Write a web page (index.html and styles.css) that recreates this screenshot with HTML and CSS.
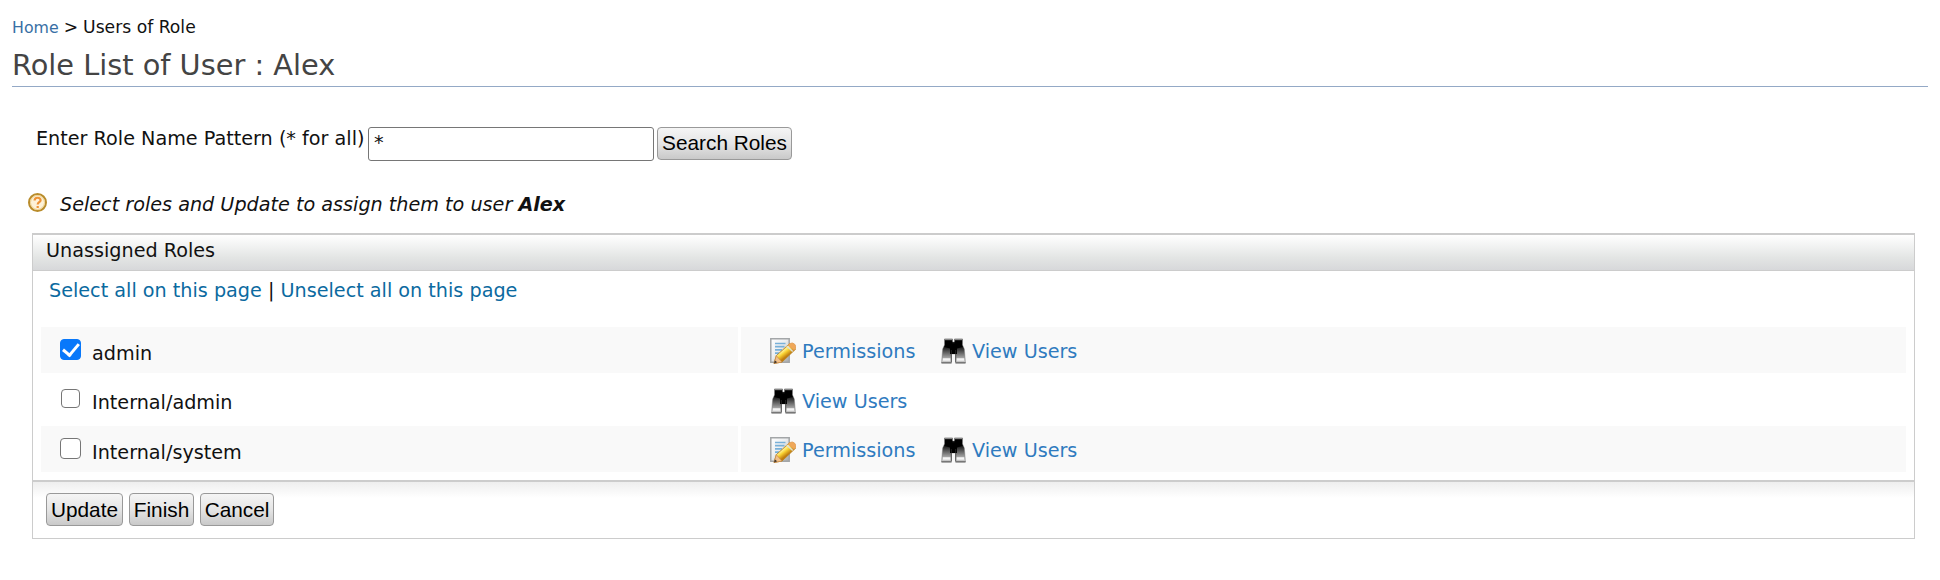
FILE: index.html
```html
<!DOCTYPE html>
<html lang="en">
<head>
<meta charset="utf-8">
<title>Users of Role</title>
<link rel="stylesheet" href="styles.css">
</head>
<body>
<svg class="defs" width="0" height="0" aria-hidden="true">
  <defs>
    <linearGradient id="paper" x1="0" y1="0" x2="1" y2="1"><stop offset="0" stop-color="#fff"/><stop offset=".45" stop-color="#eceef0"/><stop offset="1" stop-color="#a4a6a8"/></linearGradient>
    <linearGradient id="barrel" x1="0" y1="0" x2="0" y2="1"><stop offset="0" stop-color="#000"/><stop offset=".34" stop-color="#1c1c1c"/><stop offset=".8" stop-color="#aaa"/><stop offset="1" stop-color="#d2d2d2"/></linearGradient>
    <linearGradient id="wood" gradientUnits="userSpaceOnUse" x1="11" y1="10" x2="17" y2="18"><stop offset="0" stop-color="#e0a526"/><stop offset=".35" stop-color="#fff08a"/><stop offset=".6" stop-color="#f8d030"/><stop offset="1" stop-color="#c07c10"/></linearGradient>
  </defs>
  <symbol id="edit" viewBox="0 0 26 26">
    <path d="M.8.8h18.400v23.400H.8z" fill="url(#paper)" stroke="#a3a6a8" stroke-width="1.500"/>
    <path d="M5 5.500h10.500M5 8.700h9.500M5 11.900h7M5 15.100h4" stroke="#78b0d8" stroke-width="1.700"/>
    <path d="M4 25.500 6.300 17.700 19.500 5.700 25.500 11.200 12 24z" fill="url(#wood)" stroke="#b98322" stroke-width=".9"/>
    <path d="M4 25.500 6.300 17.700 12 24z" fill="#f1c08a" stroke="#c98b4b" stroke-width=".7"/>
    <path d="M4 25.500l.9-3 2.300 1.800z" fill="#39302c"/>
    <path d="M18 7l1.500-1.300Q22.500 4 24.500 6q2.200 2.300 1 4.600L24.200 12.500z" fill="#f0a85a" stroke="#dc9a50" stroke-width=".7"/>
    <path d="M16.800 8l5.900 5.500" stroke="#dde0d8" stroke-width="1.500"/>
  </symbol>
  <symbol id="binoculars" viewBox="0 0 25 26">
    <path d="M3.500 1h8v3h2V1h8v6l1.800 4L24.500 25H14.500v-9h-4v9H.5L1.700 11l1.800-4z" fill="url(#barrel)" stroke="#777" stroke-opacity=".55" stroke-width=".8"/>
    <path d="M3.500 1.500h8M13.500 1.500h8" stroke="#888" stroke-width="1.400"/>
    <path d="M4 2.700h7.200v2.800h2.600V2.700H21V7l.5 2-5.500 1.500V16H9v-5.500L3.500 9 4 7z" fill="#000"/>
    <path d="M1.800 21.500H9.500M15.500 21.500h7.700" stroke="#f5f5f5" stroke-width="2.400"/>
    <path d="M.5 24.700h10M14.500 24.700h10" stroke="#777" stroke-width="1.500"/>
    <path d="M10.300 12v12M14.700 12v12" stroke="#333" stroke-opacity=".7"/>
  </symbol>
</svg>
<div class="page">
  <nav class="crumbs"><a href="#">Home</a><span class="sep">&gt;</span><span>Users of Role</span></nav>
  <h1 class="title">Role List of User : Alex</h1>
  <form class="search">
    <label for="pattern">Enter Role Name Pattern (* for all)</label>
    <input class="pattern" id="pattern" type="text" value="*">
    <button class="btn btn-search" type="button">Search Roles</button>
  </form>
  <div class="hint">
    <svg class="help" viewBox="0 0 19 19"><circle cx="9.500" cy="9.500" r="8.500" fill="#fdf2d8" stroke="#b98c2b" stroke-width="2"/><circle cx="9.500" cy="9.500" r="7" fill="none" stroke="#ecd08d"/><path d="M6.600 7.500c0-3.600 6-3.600 6-.3 0 2-2.900 2.100-2.900 4.300M9.700 13v2" fill="none" stroke="#ee9338" stroke-width="2.200"/></svg>
    <p class="hint-text">Select roles and Update to assign them to user <strong>Alex</strong></p>
  </div>
  <section class="panel">
    <h2 class="panel-head">Unassigned Roles</h2>
    <div class="select"><a href="#">Select all on this page</a> | <a href="#">Unselect all on this page</a></div>
    <div class="roles">
      <div class="row odd">
        <label class="cell name"><input class="check" type="checkbox" checked><span>admin</span></label>
        <div class="cell actions"><a class="perm" href="#"><svg class="edit"><use href="#edit"/></svg>Permissions</a><a class="view" href="#"><svg class="bino"><use href="#binoculars"/></svg>View Users</a></div>
      </div>
      <div class="row even">
        <label class="cell name"><input class="check small" type="checkbox"><span>Internal/admin</span></label>
        <div class="cell actions"><a class="view" href="#"><svg class="bino"><use href="#binoculars"/></svg>View Users</a></div>
      </div>
      <div class="row odd">
        <label class="cell name"><input class="check" type="checkbox"><span>Internal/system</span></label>
        <div class="cell actions"><a class="perm" href="#"><svg class="edit"><use href="#edit"/></svg>Permissions</a><a class="view" href="#"><svg class="bino"><use href="#binoculars"/></svg>View Users</a></div>
      </div>
    </div>
    <div class="footer"><button class="btn update">Update</button><button class="btn finish">Finish</button><button class="btn cancel">Cancel</button></div>
  </section>
</div>
</body>
</html>
```
FILE: styles.css
```css
* { box-sizing: border-box; }
body { margin: 0; background: #fff; color: #111; font: 19.2px/24px "DejaVu Sans", sans-serif; }
a { text-decoration: none; color: #2f7bbf; }
.defs { display: block; height: 0; }
.page { padding: 15px 12px 0; }
.crumbs { display: flex; align-items: baseline; height: 24px; font-size: 17.2px; }
.crumbs a { font-size: 15.8px; color: #386fa5; }
.sep { margin: 0 5px 0 5px; }
.title { margin: 0; height: 48px; padding-top: 8px; border-bottom: 1px solid #94a9c6; color: #444; font-size: 28.8px; line-height: 36px; font-weight: normal; }
.search { display: flex; align-items: flex-start; height: 34px; margin: 40px 0 0 24px; }
.search label { width: 332px; white-space: nowrap; }
.pattern { width: 286px; height: 34px; padding: 0 5px 4px; border: 1px solid #767676; border-radius: 3px; font: 19.2px "DejaVu Sans", sans-serif; color: #111; background: #fff; }
.btn { height: 33px; padding: 0; border: 1px solid #999; border-radius: 4px; background: linear-gradient(#f5f5f5, #e5e5e5 50%, #c9c9c9); color: #000; font: 20.8px/28px "Liberation Sans", Arial, sans-serif; white-space: nowrap; }
.btn-search { width: 135px; margin-left: 3px; padding-bottom: 2px; }
.hint { display: flex; margin: 31px 0 0 16px; height: 41px; }
.help { width: 19px; height: 19px; margin-top: 1px; }
.hint-text { margin: 1px 0 0 13px; font-style: italic; }
.panel { margin: 0 13px 0 20px; height: 306px; border: 1px solid #ccc; border-top-width: 2px; }
.panel-head { margin: 0; height: 36px; padding: 4px 13px; border-bottom: 1px solid #ccc; background: linear-gradient(#fff, #e3e5e4 65%, #d7d8da); font-size: 19.2px; font-weight: normal; line-height: 24px; }
.select { height: 56px; padding: 8px 0 0 16px; }
.select a { color: #0b6aa0; }
.roles { height: 153px; padding: 0 8px; }
.row { display: grid; grid-template-columns: 697px 1fr; column-gap: 3px; height: 46px; }
.row.even { height: 47px; margin: 3px 0; }
.odd .cell { background: #f9f9f9; }
.cell { display: flex; align-items: flex-start; }
.name { padding: 12px 0 0 19px; }
.name span { margin: 3px 0 0 11px; }
.check { appearance: none; width: 21px; height: 21px; margin: 0; border: 1.5px solid #767676; border-radius: 4px; background: #fff; }
.check.small { width: 19px; height: 19px; margin: 1px 1px 0; }
.check:checked { display: grid; place-items: center; border-color: #0878fa; background: #0878fa; }
.check:checked::before { content: ""; width: 7px; height: 13px; margin: 0 0 3px 1px; border: solid #fff; border-width: 0 3px 3px 0; transform: rotate(40deg); }
.actions { padding: 12px 0 0 29px; }
.even .actions { padding-top: 13px; }
.perm, .view { display: flex; line-height: 26px; }
.perm { width: 171px; }
.edit { width: 26px; height: 26px; margin: -1px 6px 0 0; }
.bino { width: 25px; height: 26px; margin: -1px 6px 0 0; }
.even .bino { margin-left: 1px; }
.footer { display: flex; gap: 6px; height: 58px; padding: 11px 13px; border-top: 2px solid #ccc; background: linear-gradient(#eee, #fff 16px); }
.update { width: 77px; }
.finish { width: 65px; }
.cancel { width: 74px; }
```
